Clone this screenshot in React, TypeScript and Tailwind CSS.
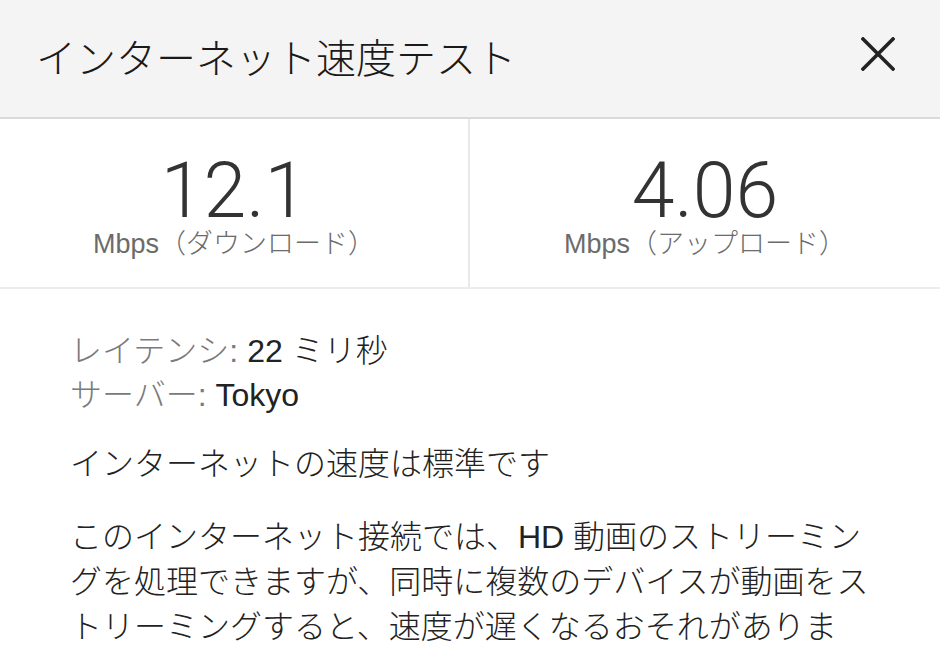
import React from "react";

const jp = { fontFamily: '"Liberation Sans", "Noto Sans CJK JP", sans-serif' };

function Stat({ value, label, divider }: { value: string; label: string; divider?: boolean }) {
  return (
    <div className={`flex flex-col items-center pt-[34px] ${divider ? "border-r-2 border-[#e8e8e8]" : ""}`}>
      <div className="text-[77px] leading-none font-light text-[#333]" style={{ fontFamily: "Roboto, sans-serif" }}>
        {value}
      </div>
      <div className="text-[27px] leading-[28px] font-light text-[#6b6b6b]">{label}</div>
    </div>
  );
}

export default function App() {
  return (
    <div className="w-[940px] h-[656px] overflow-hidden bg-white" style={jp}>
      <header className="h-[119px] bg-[#f4f4f4] border-b-2 border-[#dadada] flex items-center justify-between pl-[36px] pr-[45px]">
        <h1 className="text-[40px] font-light text-[#1a1a1a]">インターネット速度テスト</h1>
        <button className="size-[34px] flex items-center justify-center -mt-[10px]">
          <svg width="34" height="34" viewBox="0 0 34 34">
            <path d="M2 2 L32 32 M32 2 L2 32" stroke="#222" strokeWidth="3.6" strokeLinecap="square" />
          </svg>
        </button>
      </header>

      <section className="grid grid-cols-2 h-[170px] border-b-2 border-[#ececec]">
        <Stat value="12.1" label="Mbps（ダウンロード）" divider />
        <Stat value="4.06" label="Mbps（アップロード）" />
      </section>

      <div className="pl-[70px] pt-[40px] w-[875px] text-[32px] font-light text-[#222]">
        <div className="leading-[44px]">
          <div>
            <span className="text-[#7a7a7a]">レイテンシ:</span> 22 ミリ秒
          </div>
          <div>
            <span className="text-[#7a7a7a]">サーバー:</span> Tokyo
          </div>
        </div>
        <p className="mt-[25px] leading-[44px]">インターネットの速度は標準です</p>
        <p className="mt-[29px] leading-[45px]">
          このインターネット接続では、HD 動画のストリーミングを処理できますが、同時に複数のデバイスが動画をストリーミングすると、速度が遅くなるおそれがあります。
        </p>
      </div>
    </div>
  );
}
